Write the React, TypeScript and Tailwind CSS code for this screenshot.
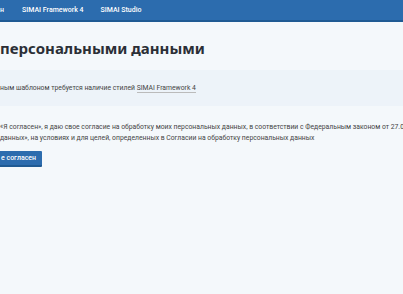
import React from "react";

export default function App() {
  return (
    <div className="w-[403px] h-[294px] overflow-hidden bg-[#f4f8fb] text-[#333]" style={{ fontFamily: "Roboto, 'Liberation Sans', sans-serif" }}>
      <header className="h-[22px] bg-[#2c6cae] border-b-2 border-[#1f5a93] flex items-center text-white text-[7px] font-medium">
        <span className="whitespace-nowrap">н</span>
        <span className="ml-[18px] whitespace-nowrap">SIMAI Framework 4</span>
        <span className="ml-[17px] whitespace-nowrap">SIMAI Studio</span>
      </header>
      <h1 className="mt-[14px] text-[15px] leading-[24px] font-bold text-[#2b2f36] whitespace-nowrap" style={{ fontFamily: "'Noto Sans', sans-serif" }}>
        персональными данными
      </h1>
      <div className="mt-[10px] h-[36px] bg-[#edf3f9] flex items-center text-[6.8px] text-[#444] whitespace-nowrap">
        <span>ным шаблоном требуется наличие стилей <span className="border-b border-[#bbb]">SIMAI Framework 4</span></span>
      </div>
      <div className="mt-[16px] text-[6.8px] leading-[11px] text-[#444] whitespace-nowrap">
        <div>«Я согласен», я даю свое согласие на обработку моих персональных данных, в соответствии с Федеральным законом от 27.07.2006 года</div>
        <div>данных», на условиях и для целей, определенных в Согласии на обработку персональных данных</div>
      </div>
      <div className="mt-[7px] flex">
        <button className="-ml-[4px] h-[16px] pl-[5px] pr-[6px] bg-[#2c6cae] border-b-2 border-[#1f5a93] text-white text-[7px] font-medium rounded-[1px] whitespace-nowrap flex items-center">
          е согласен
        </button>
      </div>
    </div>
  );
}
